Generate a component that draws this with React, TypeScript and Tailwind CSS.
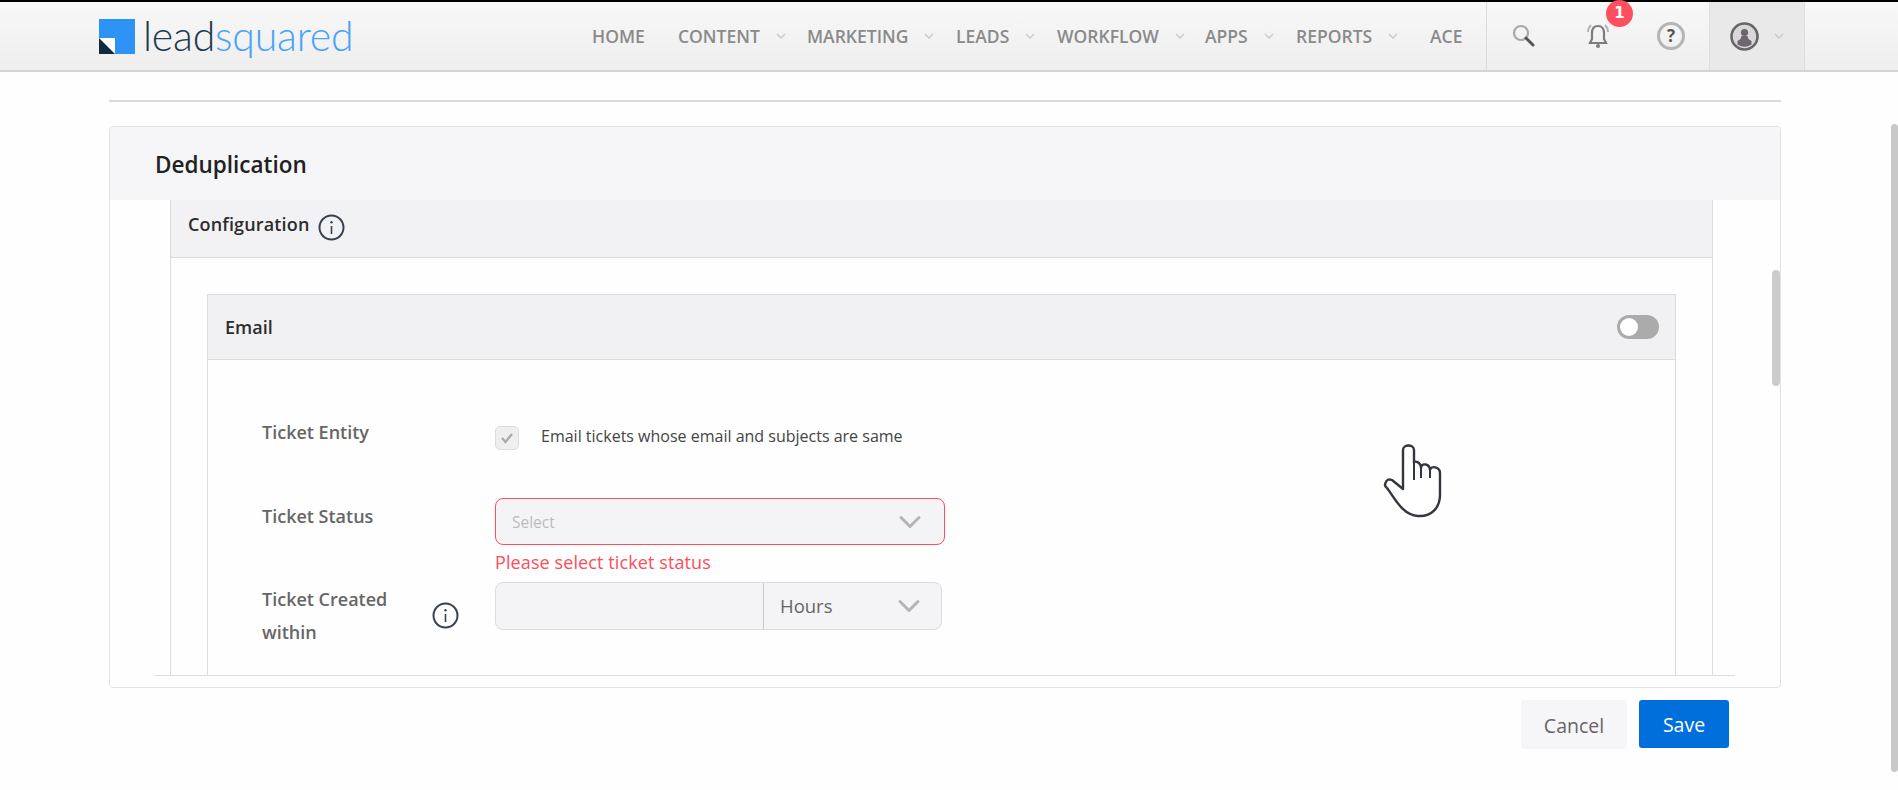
import { ChevronDown } from "lucide-react";

const ui = "font-['Open_Sans',sans-serif]";

const navItems = [
  { label: "HOME", box: "w-[86px]" },
  { label: "CONTENT", box: "w-[129px]", caret: true },
  { label: "MARKETING", box: "w-[149px]", caret: true },
  { label: "LEADS", box: "w-[101px]", caret: true },
  { label: "WORKFLOW", box: "w-[148px]", caret: true },
  { label: "APPS", box: "w-[91px]", caret: true },
  { label: "REPORTS", box: "w-[134px]", caret: true },
  { label: "ACE", box: "w-[32px]" },
];

function Caret({ className = "" }: { className?: string }) {
  return (
    <svg width="10" height="7" viewBox="0 0 10 7" fill="none" className={className}>
      <path d="M1 1l4 4 4-4" stroke="#c9c9c9" strokeWidth="1.4" />
    </svg>
  );
}

function InfoIcon({ className = "" }: { className?: string }) {
  return (
    <svg width="27" height="27" viewBox="0 0 27 27" fill="none" className={className}>
      <circle cx="13.5" cy="13.5" r="12" stroke="#38424f" strokeWidth="2" />
      <circle cx="13.5" cy="8.3" r="1.2" fill="#38424f" />
      <path d="M13.5 12v8" stroke="#38424f" strokeWidth="1.6" />
    </svg>
  );
}

function Logo() {
  return (
    <div className="flex items-center mt-[1px]">
      <svg width="36" height="35" viewBox="0 0 36 35">
        <rect width="36" height="35" fill="#2f93f5" />
        <rect y="19" width="16" height="16" fill="#fff" />
        <path d="M0 19l16 16H0z" fill="#0f2b42" />
      </svg>
      <div className="ml-[8px] -mt-[2px] font-['Lato',sans-serif] text-[41px] leading-[44px] font-light tracking-[-0.2px]">
        <span className="text-[#1f3a50]">lead</span>
        <span className="text-[#46a3f7]">squared</span>
      </div>
    </div>
  );
}

function Header() {
  return (
    <header className="h-[72px] shrink-0 border-t-2 border-b-2 border-t-black border-b-[#d4d4d4] bg-gradient-to-b from-[#f8f8f9] to-[#eeeeee] flex items-stretch pl-[99px]">
      <div className="w-[493px] flex items-center">
        <Logo />
      </div>
      <nav className="flex items-center pt-[1px] text-[17.5px] font-semibold text-[#8a8a8a]">
        {navItems.map((item) => (
          <div key={item.label} className={`${item.box} flex items-center`}>
            <span>{item.label}</span>
            {item.caret && <Caret className="ml-[16px]" />}
          </div>
        ))}
      </nav>
      <div className="ml-[24px] w-[223px] border-l border-[#dcdcdc] flex items-center relative">
        <svg width="26" height="26" viewBox="0 0 26 26" fill="none" className="ml-[24px]">
          <circle cx="10" cy="10" r="7" stroke="#a9a9a9" strokeWidth="2.2" />
          <path d="M15 15l7 7" stroke="#555" strokeWidth="3" strokeLinecap="round" />
        </svg>
        <svg width="28" height="30" viewBox="0 0 28 30" fill="none" className="ml-[47px]">
          <path d="M14 5c-4 0-6 3-6 7v6l-2 4h16l-2-4v-6c0-4-2-7-6-7z" stroke="#7d7d7d" strokeWidth="2.2" />
          <circle cx="14" cy="25" r="2" fill="#7d7d7d" />
          <path d="M4 11c0-3 1-5 3-7M24 11c0-3-1-5-3-7" stroke="#b0b0b0" strokeWidth="1.8" />
        </svg>
        <div className="absolute left-[119px] -top-[2px] w-[27px] h-[27px] rounded-full bg-[#ff4f5e] text-white text-[15px] font-bold font-['DejaVu_Sans',sans-serif] flex items-center justify-center">
          1
        </div>
        <div className="ml-[45px] w-[28px] h-[28px] rounded-full border-[3px] border-[#b5b5b5] flex items-center justify-center text-[17px] font-bold text-[#555]">
          ?
        </div>
      </div>
      <div className="w-[96px] bg-[#e9e9e9] border-x border-[#dedede] flex items-center">
        <svg width="29" height="29" viewBox="0 0 29 29" className="ml-[20px]">
          <circle cx="14.5" cy="14.5" r="13" fill="#d8d8d8" stroke="#666" strokeWidth="2.6" />
          <circle cx="14.5" cy="10.5" r="3.6" fill="#666" />
          <path d="M11.5 14h6l1 3 3 2v3.5a13 13 0 0 1-14 0V19l3-2z" fill="#6d6670" />
        </svg>
        <Caret className="ml-[15px]" />
      </div>
    </header>
  );
}

function EmailForm() {
  return (
    <div className="border border-[#dcdcde] border-b-0 flex-1">
      <div className="h-[65px] bg-[#f1f1f3] border-b border-[#dcdcde] flex items-center justify-between pl-[17px] pr-[16px]">
        <span className="text-[18px] font-semibold text-[#2c2c2c]">Email</span>
        <div className="w-[42px] h-[24px] rounded-full bg-[#ababab] p-[3px]">
          <div className="w-[18px] h-[18px] rounded-full bg-white" />
        </div>
      </div>
      <div className="pl-[54px] pt-[66px] text-[18px]">
        <div className="flex">
          <div className="w-[233px] -mt-[10px] leading-[33px] font-semibold text-[#666]">Ticket Entity</div>
          <div className="w-[24px] h-[24px] rounded-[5px] bg-[#efeff0] border border-[#dcdcdc] flex items-center justify-center">
            <svg width="14" height="12" viewBox="0 0 14 12" fill="none">
              <path d="M2 6l3.5 4L12 2" stroke="#ababab" strokeWidth="2.4" />
            </svg>
          </div>
          <div className="ml-[22px] text-[16px] leading-[20px] text-[#444]">
            Email tickets whose email and subjects are same
          </div>
        </div>
        <div className="flex mt-[48px]">
          <div className="w-[233px] mt-[2px] leading-[33px] font-semibold text-[#666]">Ticket Status</div>
          <div>
            <div className="w-[450px] h-[47px] rounded-[8px] border border-[#ff4d5a] bg-[#f4f4f6] flex items-center justify-between pl-[16px] pr-[16px]">
              <span className="pt-[2px] text-[15.5px] text-[#bcbcbc]">Select</span>
              <ChevronDown size={36} strokeWidth={2} className="text-[#b5b5b5]" />
            </div>
            <div className="mt-[5px] leading-[24px] text-[#ff4d5a] text-[18px] tracking-[0.1px]">Please select ticket status</div>
          </div>
        </div>
        <div className="flex mt-[8px]">
          <div className="w-[170px] mt-[1px] leading-[33px] font-semibold text-[#666]">
            Ticket Created within
          </div>
          <div className="w-[63px] flex items-center">
            <InfoIcon />
          </div>
          <div className="w-[447px] h-[48px] rounded-[8px] border border-[#dcdcde] bg-[#f4f4f6] flex">
            <div className="w-[268px] border-r border-[#c9c9cb]" />
            <div className="flex-1 flex items-center justify-between pl-[16px] pr-[14px]">
              <span className="text-[#666] text-[18.5px]">Hours</span>
              <ChevronDown size={36} strokeWidth={2} className="text-[#b5b5b5]" />
            </div>
          </div>
        </div>
      </div>
    </div>
  );
}

function HandCursor() {
  return (
    <svg width="59" height="74" viewBox="-1 -1 59 74" fill="none" className="absolute left-[1383px] top-[444px]">
      <path
        d="M19 44L8 35Q3 33 1.5 38Q0 41 3 43C10 52 18 70 34 71C48 72 56 62 56 50V28C56 22 47 20 46 25C46 19 37 17 37 23C37 17 30 15 30 18V5C30-1 19-1 19 5Z"
        fill="#fff"
        stroke="#33353f"
        strokeWidth="2.4"
        strokeLinejoin="round"
      />
      <path d="M30 18V35M37 23V33M46 25V33" stroke="#33353f" strokeWidth="2" />
    </svg>
  );
}

export default function App() {
  return (
    <div className={`relative h-[790px] overflow-hidden bg-[#fefefe] flex flex-col ${ui}`}>
      <Header />
      <main className="flex-1 flex flex-col px-[109px] w-[1890px]">
        <div className="mt-[28px] h-[2px] bg-[#dadada]" />
        <section className="mt-[24px] h-[562px] rounded-[4px] border border-[#e2e2e4] flex flex-col relative">
          <div className="h-[73px] shrink-0 bg-[#f6f6f8] rounded-t-[4px] flex items-center pl-[45px] pt-[2px]">
            <h1 className="text-[22.5px] font-semibold text-[#212121]">Deduplication</h1>
          </div>
          <div className="h-[475px] ml-[60px] w-[1543px] border-x border-[#dcdcde] flex flex-col">
            <div className="h-[58px] shrink-0 bg-[#f2f2f4] border-b border-[#dcdcde] flex items-center pl-[17px]">
              <span className="-mt-[8px] text-[18px] font-semibold text-[#2c2c2c] tracking-[0.15px]">Configuration</span>
              <InfoIcon className="ml-[8px] -mt-[2px]" />
            </div>
            <div className="flex-1 flex px-[36px] pt-[36px] overflow-hidden">
              <EmailForm />
            </div>
          </div>
          <div className="mx-[45px] border-t border-[#dcdcde]" />
          <div className="absolute right-0 top-[143px] w-[8px] h-[116px] rounded-full bg-[#cccccc]" />
        </section>
        <div className="flex justify-end gap-[12px] mt-[12px] pr-[52px]">
          <button className="w-[106px] h-[49px] pt-[2px] rounded-[3px] bg-[#f6f6f8] text-[19.5px] text-[#666]">Cancel</button>
          <button className="w-[90px] h-[48px] pt-[2px] rounded-[3px] bg-[#006fdb] text-[19.5px] text-white">Save</button>
        </div>
      </main>
      <div className="absolute right-0 top-[124px] w-[7px] h-[648px] rounded-full bg-[#c8c8c8]" />
      <HandCursor />
    </div>
  );
}
